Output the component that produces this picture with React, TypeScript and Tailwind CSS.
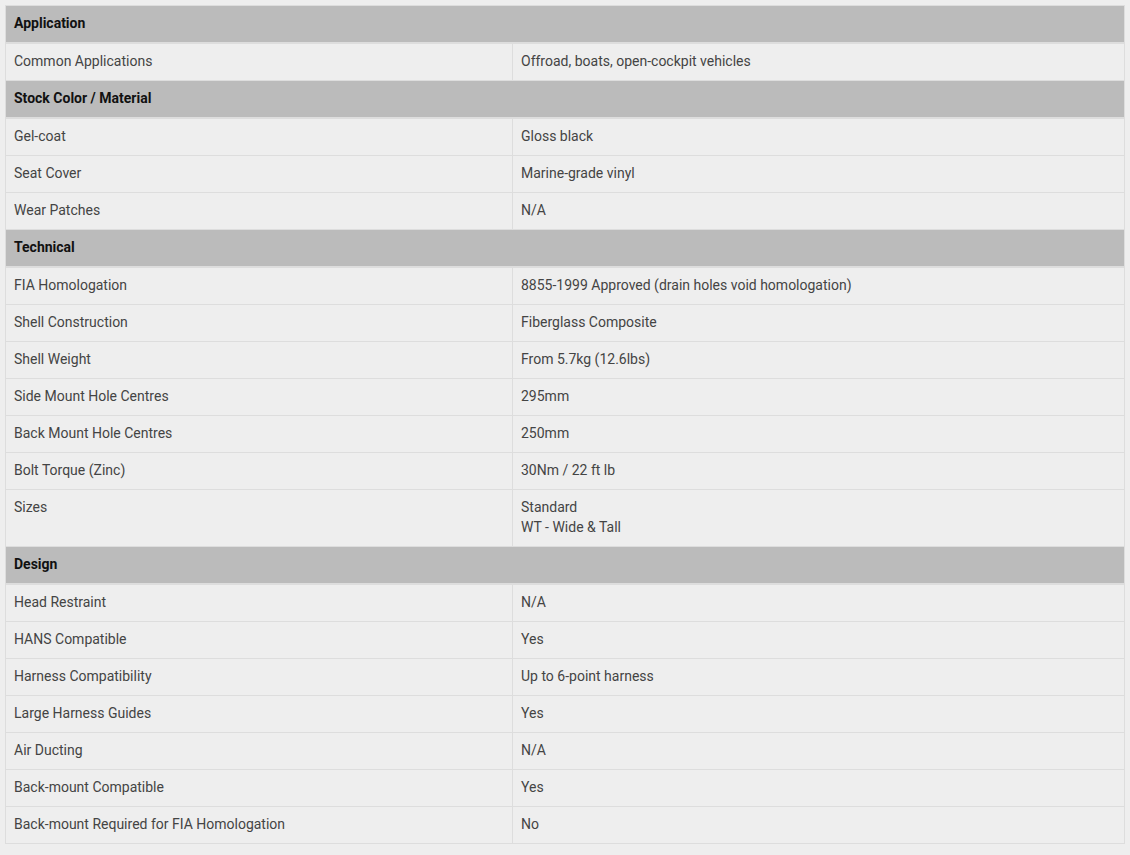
type Row = { label: string; value: string[] };
type Section = { title: string; rows: Row[] };

const sections: Section[] = [
  {
    title: "Application",
    rows: [{ label: "Common Applications", value: ["Offroad, boats, open-cockpit vehicles"] }],
  },
  {
    title: "Stock Color / Material",
    rows: [
      { label: "Gel-coat", value: ["Gloss black"] },
      { label: "Seat Cover", value: ["Marine-grade vinyl"] },
      { label: "Wear Patches", value: ["N/A"] },
    ],
  },
  {
    title: "Technical",
    rows: [
      { label: "FIA Homologation", value: ["8855-1999 Approved (drain holes void homologation)"] },
      { label: "Shell Construction", value: ["Fiberglass Composite"] },
      { label: "Shell Weight", value: ["From 5.7kg (12.6lbs)"] },
      { label: "Side Mount Hole Centres", value: ["295mm"] },
      { label: "Back Mount Hole Centres", value: ["250mm"] },
      { label: "Bolt Torque (Zinc)", value: ["30Nm / 22 ft lb"] },
      { label: "Sizes", value: ["Standard", "WT - Wide & Tall"] },
    ],
  },
  {
    title: "Design",
    rows: [
      { label: "Head Restraint", value: ["N/A"] },
      { label: "HANS Compatible", value: ["Yes"] },
      { label: "Harness Compatibility", value: ["Up to 6-point harness"] },
      { label: "Large Harness Guides", value: ["Yes"] },
      { label: "Air Ducting", value: ["N/A"] },
      { label: "Back-mount Compatible", value: ["Yes"] },
      { label: "Back-mount Required for FIA Homologation", value: ["No"] },
    ],
  },
];

export default function App() {
  return (
    <main className="min-h-[855px] bg-[#eeeeee] p-[5px] font-['Roboto',sans-serif] text-[14px] leading-[20px]">
      <table className="w-[1120px] border-collapse border border-[#dddddd] table-fixed">
        <colgroup>
          <col className="w-[507px]" />
          <col />
        </colgroup>
        <tbody>
          {sections.map((s) => (
            <>
              <tr key={s.title} className="bg-[#bbbbbb] border-b-2 border-[#dddddd]">
                <th colSpan={2} className="px-2 pt-[7px] pb-[9px] text-left font-bold text-[#111111]">
                  {s.title}
                </th>
              </tr>
              {s.rows.map((r) => (
                <tr key={r.label} className="border-b border-[#dddddd]">
                  <td className="px-2 pt-[7px] pb-[9px] align-top text-[#444444] border-r border-[#dddddd]">
                    {r.label}
                  </td>
                  <td className="px-2 pt-[7px] pb-[9px] align-top text-[#444444]">
                    {r.value.map((v) => (
                      <div key={v}>{v}</div>
                    ))}
                  </td>
                </tr>
              ))}
            </>
          ))}
        </tbody>
      </table>
    </main>
  );
}
